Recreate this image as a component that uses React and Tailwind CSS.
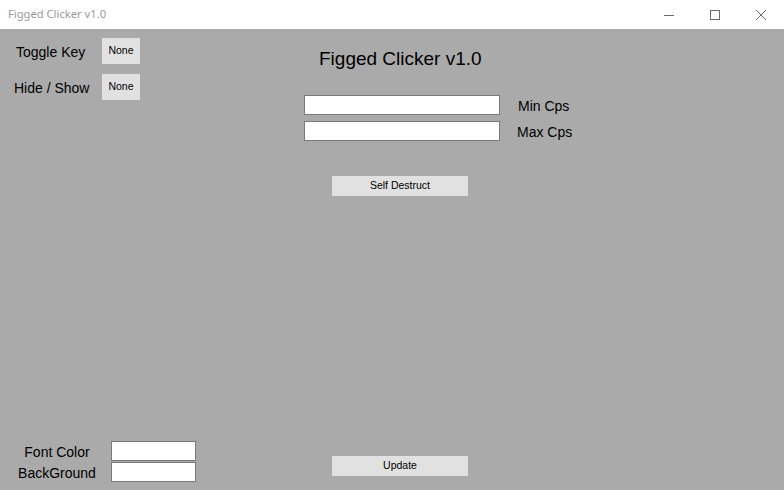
import React from 'react';

const sans = { fontFamily: '"Liberation Sans", Arial, sans-serif' };

function WinButton({ children, className = '' }) {
  return (
    <button
      type="button"
      className={`flex items-center justify-center bg-[#e1e1e1] text-[10.5px] text-black ${className}`}
      style={sans}
    >
      {children}
    </button>
  );
}

function TextBox({ className = '' }) {
  return <input type="text" className={`box-border h-[20px] border border-[#7a7a7a] bg-white outline-none ${className}`} />;
}

export default function App() {
  return (
    <div className="h-[490px] w-[784px] overflow-hidden bg-[#aaaaaa]" style={sans}>
      {/* title bar */}
      <div className="flex h-[29px] items-center bg-white">
        <span
          className="ml-[8px] text-[11.2px] text-[#999999]"
          style={{ fontFamily: '"Segoe UI", "Noto Sans", sans-serif' }}
        >
          Figged Clicker v1.0
        </span>
        <div className="ml-auto flex h-full items-center">
          <div className="flex h-full w-[46px] items-center justify-center">
            <svg width="10" height="10" viewBox="0 0 10 10">
              <path d="M0 5.5h10" stroke="#6b6b6b" strokeWidth="1" />
            </svg>
          </div>
          <div className="flex h-full w-[46px] items-center justify-center">
            <svg width="10" height="10" viewBox="0 0 10 10">
              <rect x="0.5" y="0.5" width="9" height="9" fill="none" stroke="#6b6b6b" strokeWidth="1" />
            </svg>
          </div>
          <div className="flex h-full w-[46px] items-center justify-center">
            <svg width="10" height="10" viewBox="0 0 10 10">
              <path d="M0 0L10 10M10 0L0 10" stroke="#6b6b6b" strokeWidth="1" />
            </svg>
          </div>
        </div>
      </div>

      {/* client area */}
      <div className="flex h-[461px] flex-col">
        <div className="flex">
          <div className="flex w-[304px] flex-col gap-[10px] pt-[9px]">
            <div className="flex h-[26px] items-center">
              <span className="ml-[16px] mt-[2px] w-[86px] text-[14px] leading-[16px] text-black">Toggle Key</span>
              <WinButton className="h-[26px] w-[38px]">None</WinButton>
            </div>
            <div className="flex h-[26px] items-center">
              <span className="ml-[14px] mt-[2px] w-[88px] text-[14px] leading-[16px] text-black">Hide / Show</span>
              <WinButton className="h-[26px] w-[38px]">None</WinButton>
            </div>
          </div>

          <div className="flex flex-col pt-[19px]">
            <div className="ml-[15px] h-[22px] text-[19px] leading-[22px] text-black">Figged Clicker v1.0</div>
            <div className="mt-[25px] flex h-[20px] items-center">
              <TextBox className="w-[196px]" />
              <span className="ml-[18px] mt-[1px] text-[14px] leading-[16px] text-black">Min Cps</span>
            </div>
            <div className="mt-[6px] flex h-[20px] items-center">
              <TextBox className="w-[196px]" />
              <span className="ml-[17px] mt-[1px] text-[14px] leading-[16px] text-black">Max Cps</span>
            </div>
            <WinButton className="ml-[28px] mt-[35px] h-[20px] w-[136px]">Self Destruct</WinButton>
          </div>
        </div>

        <div className="mt-auto flex items-end pb-[8px]">
          <div className="flex flex-col gap-[1px]">
            <div className="flex h-[20px] items-center">
              <span className="ml-[17px] mt-[2px] w-[80px] text-center text-[14px] leading-[16px] text-black">Font Color</span>
              <TextBox className="ml-[14px] w-[85px]" />
            </div>
            <div className="flex h-[20px] items-center">
              <span className="ml-[17px] mt-[2px] w-[80px] text-center text-[14px] leading-[16px] text-black">BackGround</span>
              <TextBox className="ml-[14px] w-[85px]" />
            </div>
          </div>
          <WinButton className="mb-[6px] ml-[136px] h-[20px] w-[136px]">Update</WinButton>
        </div>
      </div>
    </div>
  );
}
